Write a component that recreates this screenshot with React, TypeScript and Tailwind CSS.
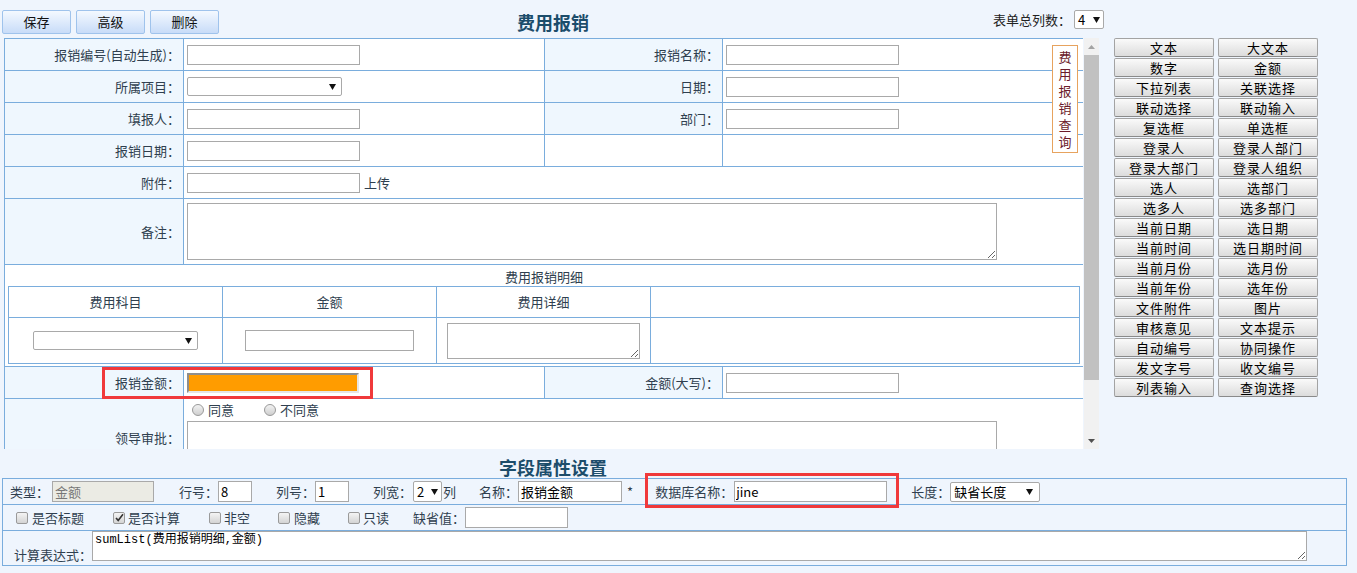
import React from 'react';

const labelTd =
  'border border-[#7aaddd] bg-[#eff7fe] text-right pr-[3px] whitespace-nowrap';
const valueTd = 'border border-[#7aaddd] bg-white pl-[3px]';
const inputCls =
  'block w-[173px] h-[20px] border border-[#a9a9a9] bg-white px-[2px] text-[13px] outline-none';

const Caret = () => (
  <svg width="7" height="7" viewBox="0 0 7 7">
    <path d="M0 1h7L3.5 7z" fill="#111" />
  </svg>
);

const Box = ({ checked }: { checked?: boolean }) => (
  <span className="flex h-[12px] w-[12px] items-center justify-center rounded-[2px] border border-[#9a9a9a] bg-linear-to-b from-[#f4f4f4] to-[#d4d4d4]">
    {checked && (
      <svg width="9" height="9" viewBox="0 0 9 9">
        <path d="M1 5l2.2 2.4L8 1.2" stroke="#333" strokeWidth="1.6" fill="none" />
      </svg>
    )}
  </span>
);

const Radio = () => (
  <span className="block h-[12px] w-[12px] rounded-full border border-[#9a9a9a] bg-linear-to-b from-[#f2f2f2] to-[#cfcfcf]" />
);

const tools = [
  ['文本', '大文本'],
  ['数字', '金额'],
  ['下拉列表', '关联选择'],
  ['联动选择', '联动输入'],
  ['复选框', '单选框'],
  ['登录人', '登录人部门'],
  ['登录大部门', '登录人组织'],
  ['选人', '选部门'],
  ['选多人', '选多部门'],
  ['当前日期', '选日期'],
  ['当前时间', '选日期时间'],
  ['当前月份', '选月份'],
  ['当前年份', '选年份'],
  ['文件附件', '图片'],
  ['审核意见', '文本提示'],
  ['自动编号', '协同操作'],
  ['发文字号', '收文编号'],
  ['列表输入', '查询选择'],
];

export default function App() {
  return (
    <div className="h-[573px] w-[1357px] overflow-hidden bg-[#eff5fd] pl-[2px] font-['Noto_Sans_CJK_SC','Noto_Sans',sans-serif] text-[13px] text-[#2f3f4f]">
      {/* top bar */}
      <div className="grid h-[38px] w-[1102px] grid-cols-[1fr_auto_1fr]">
        <div className="flex gap-[5px] pt-[10px]">
          {['保存', '高级', '删除'].map((b) => (
            <button
              key={b}
              className="h-[24px] w-[69px] rounded-[2px] border border-[#9fc3ec] bg-linear-to-b from-[#f4f9ff] to-[#c8dcf8] text-[13px] font-normal text-[#111]"
            >
              {b}
            </button>
          ))}
        </div>
        <div className="pt-[11px] text-[18px] font-bold leading-[22px] text-[#1c4d6b]">
          费用报销
        </div>
        <div className="flex items-start justify-end pt-[10px]">
          <span className="leading-[19px] text-[#222]">表单总列数：</span>
          <div className="ml-[3px] flex h-[19px] w-[30px] items-center justify-between rounded-[2px] border border-[#a9a9a9] bg-white pl-[3px] pr-[3px] text-black">
            <span>4</span>
            <Caret />
          </div>
        </div>
      </div>

      {/* main row */}
      <div className="flex h-[411px] items-start">
        <div className="ml-[2px] flex h-[411px] w-[1096px]">
          <div className="relative h-[411px] w-[1079px] overflow-hidden">
            <table className="w-[1079px] table-fixed border-collapse">
              <colgroup>
                <col className="w-[179px]" />
                <col className="w-[361px]" />
                <col className="w-[178px]" />
                <col className="w-[361px]" />
              </colgroup>
              <tbody>
                <tr className="h-[32px]">
                  <td className={labelTd}>报销编号(自动生成)：</td>
                  <td className={valueTd}>
                    <input className={inputCls} readOnly />
                  </td>
                  <td className={labelTd}>报销名称：</td>
                  <td className={valueTd}>
                    <input className={inputCls} readOnly />
                  </td>
                </tr>
                <tr className="h-[32px]">
                  <td className={labelTd}>所属项目：</td>
                  <td className={valueTd}>
                    <div className="flex h-[19px] w-[155px] items-center justify-end rounded-[2px] border border-[#a9a9a9] bg-white pr-[5px]">
                      <Caret />
                    </div>
                  </td>
                  <td className={labelTd}>日期：</td>
                  <td className={valueTd}>
                    <input className={inputCls} readOnly />
                  </td>
                </tr>
                <tr className="h-[32px]">
                  <td className={labelTd}>填报人：</td>
                  <td className={valueTd}>
                    <input className={inputCls} readOnly />
                  </td>
                  <td className={labelTd}>部门：</td>
                  <td className={valueTd}>
                    <input className={inputCls} readOnly />
                  </td>
                </tr>
                <tr className="h-[32px]">
                  <td className={labelTd}>报销日期：</td>
                  <td className={valueTd}>
                    <input className={inputCls} readOnly />
                  </td>
                  <td className="border border-[#7aaddd] bg-white" />
                  <td className="border border-[#7aaddd] bg-white" />
                </tr>
                <tr className="h-[32px]">
                  <td className={labelTd}>附件：</td>
                  <td className={valueTd} colSpan={3}>
                    <div className="flex items-center">
                      <input className={inputCls} readOnly />
                      <span className="ml-[4px]">上传</span>
                    </div>
                  </td>
                </tr>
                <tr className="h-[66px]">
                  <td className={labelTd}>备注：</td>
                  <td className={valueTd} colSpan={3}>
                    <textarea
                      className="block h-[57px] w-[810px] border border-[#a9a9a9] bg-white outline-none"
                      readOnly
                    />
                  </td>
                </tr>
                <tr className="h-[102px]">
                  <td className="border border-[#7aaddd] bg-white px-[3px] align-top" colSpan={4}>
                    <div className="pt-[3px] text-center leading-[18px]">费用报销明细</div>
                    <table className="w-[1071px] table-fixed border-collapse">
                      <colgroup>
                        <col className="w-[214px]" />
                        <col className="w-[214px]" />
                        <col className="w-[214px]" />
                        <col className="w-[429px]" />
                      </colgroup>
                      <tbody>
                        <tr className="h-[31px]">
                          <td className="border border-[#7aaddd] text-center">费用科目</td>
                          <td className="border border-[#7aaddd] text-center">金额</td>
                          <td className="border border-[#7aaddd] text-center">费用详细</td>
                          <td className="border border-[#7aaddd]" />
                        </tr>
                        <tr className="h-[46px]">
                          <td className="border border-[#7aaddd]">
                            <div className="mx-auto flex h-[19px] w-[165px] items-center justify-end rounded-[2px] border border-[#a9a9a9] bg-white pr-[5px]">
                              <Caret />
                            </div>
                          </td>
                          <td className="border border-[#7aaddd]">
                            <input
                              className="mx-auto block h-[21px] w-[169px] border border-[#a9a9a9] bg-white outline-none"
                              readOnly
                            />
                          </td>
                          <td className="border border-[#7aaddd]">
                            <textarea
                              className="mx-auto block h-[36px] w-[193px] border border-[#a9a9a9] bg-white outline-none"
                              readOnly
                            />
                          </td>
                          <td className="border border-[#7aaddd]" />
                        </tr>
                      </tbody>
                    </table>
                  </td>
                </tr>
                <tr className="h-[32px]">
                  <td className={`${labelTd} relative`}>
                    报销金额：
                    <div className="pointer-events-none absolute left-[97px] top-[0px] h-[32px] w-[271px] border-[3px] border-[#f0393b]" />
                  </td>
                  <td className={valueTd}>
                    <div className="h-[20px] w-[172px] border-2 border-t-[#8e8e8e] border-l-[#8e8e8e] border-r-[#e6e6e6] border-b-[#e6e6e6] bg-[#ff9c00]" />
                  </td>
                  <td className={labelTd}>金额(大写)：</td>
                  <td className={valueTd}>
                    <input className={inputCls} readOnly />
                  </td>
                </tr>
                <tr className="h-[78px]">
                  <td className={labelTd}>领导审批：</td>
                  <td className="border border-[#7aaddd] bg-white align-top" colSpan={3}>
                    <div className="flex h-[22px] items-center pl-[8px]">
                      <Radio />
                      <span className="ml-[4px]">同意</span>
                      <span className="ml-[30px]">
                        <Radio />
                      </span>
                      <span className="ml-[4px]">不同意</span>
                    </div>
                    <textarea
                      className="ml-[3px] block h-[52px] w-[810px] border border-[#a9a9a9] bg-white outline-none"
                      readOnly
                    />
                  </td>
                </tr>
              </tbody>
            </table>

            <div className="absolute left-[1048px] top-[7px] flex w-[26px] flex-col items-center border border-[#e7a35e] bg-white py-[2px] leading-[17px] text-[#6b1b2a]">
              {['费', '用', '报', '销', '查', '询'].map((c) => (
                <span key={c}>{c}</span>
              ))}
            </div>
          </div>

          {/* scrollbar */}
          <div className="ml-[1px] flex h-[411px] w-[15px] flex-col bg-[#f1f1f1]">
            <div className="flex h-[17px] items-center justify-center">
              <svg width="7" height="4" viewBox="0 0 7 4">
                <path d="M0 4h7L3.5 0z" fill="#a3a3a3" />
              </svg>
            </div>
            <div className="h-[325px] bg-[#c1c1c1]" />
            <div className="flex-1" />
            <div className="flex h-[17px] items-center justify-center">
              <svg width="7" height="4" viewBox="0 0 7 4">
                <path d="M0 0h7L3.5 4z" fill="#505050" />
              </svg>
            </div>
          </div>
        </div>

        {/* field type buttons */}
        <div className="ml-[14px] grid auto-rows-[19px] grid-cols-[100px_100px] gap-x-[4px] gap-y-[1px]">
          {tools.flat().map((t) => (
            <button
              key={t}
              className="rounded-[2px] border border-[#a3a3a3] border-b-[#8a8a8a] bg-linear-to-b from-[#fafafa] to-[#dcdcdc] text-[13px] leading-[17px] tracking-[1px] text-black"
            >
              {t}
            </button>
          ))}
        </div>
      </div>

      {/* field settings */}
      <div className="h-[29px] w-[1102px] pt-[7px] text-center text-[18px] font-bold leading-[22px] text-[#1c4d6b]">
        字段属性设置
      </div>
      <div className="relative w-[1345px] border border-[#7aaddd]">
        <div className="pointer-events-none absolute left-[642px] top-[-6px] h-[35px] w-[254px] border-[3px] border-[#f0393b]" />
        <div className="flex h-[26px] items-center border-b border-[#7aaddd]">
          <span className="ml-[7px]">类型：</span>
          <input
            className="ml-[3px] h-[21px] w-[102px] border border-[#a9a9a9] bg-[#ebebe4] px-[2px] text-[13px] text-[#777]"
            value="金额"
            readOnly
          />
          <span className="ml-[25px]">行号：</span>
          <input className="h-[21px] w-[34px] border border-[#a9a9a9] bg-white px-[2px] text-black" value="8" readOnly />
          <span className="ml-[24px]">列号：</span>
          <input className="h-[21px] w-[34px] border border-[#a9a9a9] bg-white px-[2px] text-black" value="1" readOnly />
          <span className="ml-[24px]">列宽：</span>
          <div className="ml-[1px] flex h-[21px] w-[29px] items-center justify-between rounded-[2px] border border-[#a9a9a9] bg-white pl-[3px] pr-[3px] text-black">
            <span>2</span>
            <Caret />
          </div>
          <span className="ml-[1px]">列</span>
          <span className="ml-[23px]">名称：</span>
          <input className="h-[21px] w-[104px] border border-[#a9a9a9] bg-white px-[2px] text-black" value="报销金额" readOnly />
          <span className="ml-[5px]">*</span>
          <span className="ml-[22px]">数据库名称：</span>
          <input className="ml-[1px] h-[21px] w-[153px] border border-[#a9a9a9] bg-white px-[1px] text-black" value="jine" readOnly />
          <span className="ml-[24px]">长度：</span>
          <div className="flex h-[20px] w-[90px] items-center justify-between rounded-[2px] border border-[#a9a9a9] bg-white pl-[3px] pr-[6px] text-black">
            <span>缺省长度</span>
            <Caret />
          </div>
        </div>
        <div className="flex h-[26px] items-center border-b border-[#7aaddd]">
          <span className="ml-[13px]">
            <Box />
          </span>
          <span className="ml-[4px]">是否标题</span>
          <span className="ml-[29px]">
            <Box checked />
          </span>
          <span className="ml-[3px]">是否计算</span>
          <span className="ml-[29px]">
            <Box />
          </span>
          <span className="ml-[3px]">非空</span>
          <span className="ml-[28px]">
            <Box />
          </span>
          <span className="ml-[4px]">隐藏</span>
          <span className="ml-[28px]">
            <Box />
          </span>
          <span className="ml-[3px]">只读</span>
          <span className="ml-[24px]">缺省值：</span>
          <input className="h-[21px] w-[103px] border border-[#a9a9a9] bg-white" readOnly />
        </div>
        <div className="flex h-[34px] items-start">
          <span className="ml-[11px] self-end pb-[1px] leading-[18px]">计算表达式：</span>
          <textarea
            className="block h-[30px] w-[1215px] border border-[#a9a9a9] bg-white px-[2px] font-['Liberation_Mono','Noto_Sans_CJK_SC',monospace] text-[12px] leading-[16px] text-black outline-none"
            value="sumList(费用报销明细,金额)"
            readOnly
          />
        </div>
      </div>
    </div>
  );
}
